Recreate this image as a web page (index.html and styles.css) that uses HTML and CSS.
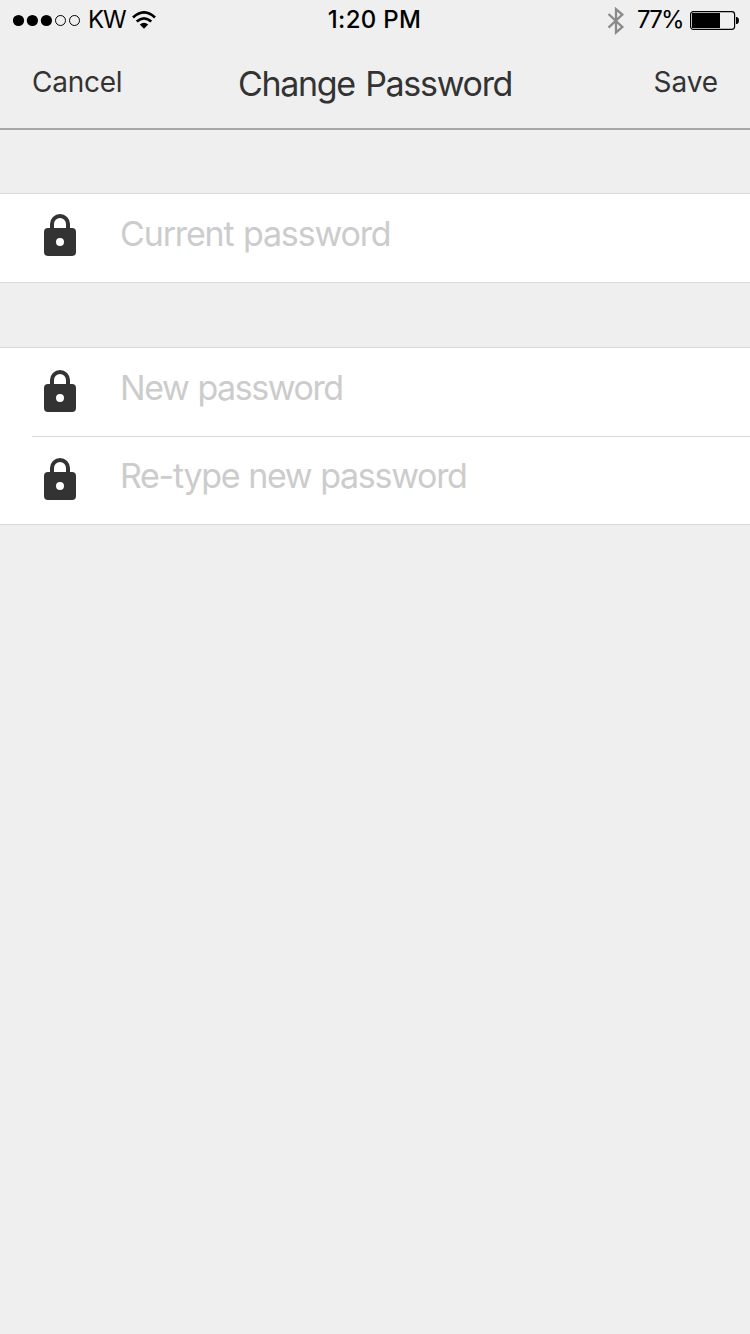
FILE: index.html
```html
<!DOCTYPE html>
<html lang="en">
<head>
<meta charset="utf-8">
<title>Change Password</title>
<link rel="stylesheet" href="styles.css">
</head>
<body>
<header class="header">
  <div class="status">
    <div class="status-left">
      <svg class="signal" width="68" height="13" viewBox="0 0 68 13">
        <circle cx="5.5" cy="6.5" r="5.6"/><circle cx="19.4" cy="6.5" r="5.6"/><circle cx="33.4" cy="6.5" r="5.6"/>
        <g fill="none" stroke="#000"><circle cx="47.5" cy="6.5" r="5"/><circle cx="61.5" cy="6.5" r="5"/></g>
      </svg>
      <span class="carrier">KW</span>
      <svg class="wifi" width="24" height="18" viewBox="0 0 24 18">
        <g fill="none" stroke="#000" stroke-width="2.7"><path d="M1 6.4Q12-3.6 23 6.4"/><path d="M4.7 10.6Q12 4.2 19.3 10.6"/></g>
        <path d="M7.8 13.5Q12 10.1 16.2 13.5L12 17.8Z"/>
      </svg>
    </div>
    <span class="time">1:20 PM</span>
    <div class="status-right">
      <svg class="bluetooth" width="18" height="28" viewBox="0 0 18 28">
        <path d="M1.5 7L15.3 20L9 25.4V2.2L15.3 7.6L1.5 20.6" fill="none" stroke="#8a8a8a" stroke-width="2.3"/>
      </svg>
      <span class="percent">77%</span>
      <svg class="battery" width="50" height="20" viewBox="0 0 50 20">
        <rect x=".6" y=".6" width="44" height="17.8" rx="2.8" fill="none" stroke="#000" stroke-width="1.2"/>
        <rect x="2" y="2" width="28" height="15"/>
        <path d="M46 6h1q2 .5 2 3.5t-2 3.5h-1z"/>
      </svg>
    </div>
  </div>
  <nav class="nav">
    <span class="cancel">Cancel</span>
    <h1 class="title">Change Password</h1>
    <span class="save">Save</span>
  </nav>
</header>
<main>
  <section class="group group-current">
    <div class="row">
      <svg class="lock" width="32" height="42" viewBox="0 0 32 42"><path class="shackle" d="M8 16V10a8 8 0 0 1 16 0V16"/><path fill-rule="evenodd" d="M4 14H28a4 4 0 0 1 4 4V38a4 4 0 0 1-4 4H4a4 4 0 0 1-4-4V18a4 4 0 0 1 4-4ZM16 24a4 4 0 1 0 0 8a4 4 0 1 0 0-8Z"/></svg>
      <span class="field current">Current password</span>
    </div>
  </section>
  <section class="group group-new">
    <div class="row">
      <svg class="lock" width="32" height="42" viewBox="0 0 32 42"><path class="shackle" d="M8 16V10a8 8 0 0 1 16 0V16"/><path fill-rule="evenodd" d="M4 14H28a4 4 0 0 1 4 4V38a4 4 0 0 1-4 4H4a4 4 0 0 1-4-4V18a4 4 0 0 1 4-4ZM16 24a4 4 0 1 0 0 8a4 4 0 1 0 0-8Z"/></svg>
      <span class="field new">New password</span>
    </div>
    <div class="row row-divided">
      <svg class="lock" width="32" height="42" viewBox="0 0 32 42"><path class="shackle" d="M8 16V10a8 8 0 0 1 16 0V16"/><path fill-rule="evenodd" d="M4 14H28a4 4 0 0 1 4 4V38a4 4 0 0 1-4 4H4a4 4 0 0 1-4-4V18a4 4 0 0 1 4-4ZM16 24a4 4 0 1 0 0 8a4 4 0 1 0 0-8Z"/></svg>
      <span class="field retype">Re-type new password</span>
    </div>
  </section>
</main>
</body>
</html>
```
FILE: styles.css
```css
* { box-sizing: border-box; }
body {
  margin: 0;
  min-height: 1334px;
  background: #efefef;
  color: #333;
  font-family: Inter, "Liberation Sans", sans-serif;
}
svg { display: block; flex: none; }
span, h1 { white-space: nowrap; }
.header { height: 130px; border-bottom: 2px solid #a6a6a6; }
.status {
  display: grid;
  grid-template-columns: 1fr auto 1fr;
  height: 40px;
  padding: 0 10px 0 13px;
  color: #000;
  font-size: 24px;
  line-height: 39px;
}
.status-left, .status-right { display: flex; align-items: flex-start; }
.status-right { justify-content: flex-end; }
.signal { margin: 14px 7px 0 0; }
.carrier { width: 44px; letter-spacing: -1.2px; font-weight: 430; }
.wifi { margin-top: 11px; }
.time { margin-right: 4px; font-weight: 550; letter-spacing: 0.3px; }
.bluetooth { margin: 7px 12px 0 0; }
.percent { width: 53px; font-weight: 430; letter-spacing: -1.8px; }
.battery { margin-top: 11px; }
.nav {
  display: grid;
  grid-template-columns: 1fr auto 1fr;
  padding: 22px 32px 0;
  font-size: 28px;
  line-height: 40px;
  font-weight: 430;
}
.cancel { letter-spacing: -0.25px; }
.title { margin: 2px 0 0; font-size: 34px; font-weight: 430; letter-spacing: -1.3px; word-spacing: 2px; }
.save { text-align: right; letter-spacing: -0.1px; }
.group {
  background: #fff;
  border-top: 1px solid #d9d9d9;
  border-bottom: 1px solid #d9d9d9;
}
.group-current { margin-top: 63px; }
.group-new { margin-top: 64px; }
.row {
  display: flex;
  align-items: flex-start;
  height: 88px;
  margin-left: 32px;
  padding: 20px 0 0 12px;
}
.row-divided { border-top: 1px solid #d9d9d9; padding-top: 19px; }
.lock { margin-right: 44px; fill: #333; }
.group-new .lock { margin-top: 2px; }
.shackle { fill: none; stroke: #333; stroke-width: 4; }
.field { color: #ccc; font-size: 34px; line-height: 40px; font-weight: 430; }
.current { letter-spacing: -1.15px; word-spacing: 1px; }
.new { letter-spacing: -1.45px; word-spacing: 1px; }
.retype { letter-spacing: -1.3px; word-spacing: 0.6px; }
```
